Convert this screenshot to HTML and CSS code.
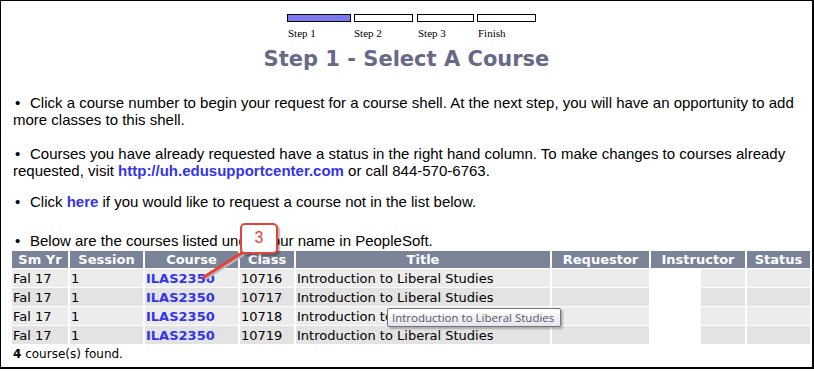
FILE: index.html
```html
<!DOCTYPE html>
<html lang="en">
<head>
  <meta charset="UTF-8">
  <title>Step 1 - Select A Course</title>
  <link rel="stylesheet" href="styles.css">
</head>
<body>
  <div class="frame">

    <!-- progress steps -->
    <div class="steps">
      <div class="step step-one"><div class="bar done"></div><span>Step 1</span></div>
      <div class="step step-two"><div class="bar"></div><span>Step 2</span></div>
      <div class="step step-three"><div class="bar"></div><span>Step 3</span></div>
      <div class="step step-four"><div class="bar"></div><span>Finish</span></div>
    </div>

    <h1 class="title">Step 1 - Select A Course</h1>

    <p class="note first"><span class="dot">&bull;</span>Click a course number to begin your request for a course shell. At the next step, you will have an opportunity to add more classes to this shell.</p>
    <p class="note second"><span class="dot">&bull;</span>Courses you have already requested have a status in the right hand column. To make changes to courses already requested, visit <a href="#">http://uh.edusupportcenter.com</a> or call 844-570-6763.</p>
    <p class="note third"><span class="dot">&bull;</span>Click <a href="#">here</a> if you would like to request a course not in the list below.</p>
    <p class="note last"><span class="dot">&bull;</span>Below are the courses listed under your name in PeopleSoft.</p>

    <table class="courses">
      <thead>
        <tr>
          <th class="c-yr">Sm Yr</th>
          <th class="c-session">Session</th>
          <th class="c-course">Course</th>
          <th class="c-class">Class</th>
          <th class="c-title">Title</th>
          <th class="c-req">Requestor</th>
          <th class="c-inst">Instructor</th>
          <th class="c-status">Status</th>
        </tr>
      </thead>
      <tbody>
        <tr>
          <td>Fal 17</td><td>1</td><td><a href="#">ILAS2350</a></td><td>10716</td>
          <td>Introduction to Liberal Studies</td><td></td><td class="inst"></td><td></td>
        </tr>
        <tr>
          <td>Fal 17</td><td>1</td><td><a href="#">ILAS2350</a></td><td>10717</td>
          <td>Introduction to Liberal Studies</td><td></td><td class="inst"></td><td></td>
        </tr>
        <tr>
          <td>Fal 17</td><td>1</td><td><a href="#">ILAS2350</a></td><td>10718</td>
          <td>Introduction to Liberal Studies</td><td></td><td class="inst"></td><td></td>
        </tr>
        <tr>
          <td>Fal 17</td><td>1</td><td><a href="#">ILAS2350</a></td><td>10719</td>
          <td>Introduction to Liberal Studies</td><td></td><td class="inst"></td><td></td>
        </tr>
      </tbody>
    </table>

    <p class="found"><b>4</b> course(s) found.</p>

    <!-- annotation callout -->
    <svg class="arrow" width="814" height="372" viewBox="0 0 814 372">
      <line x1="248" y1="249" x2="204" y2="277" stroke="#b9b9b9" stroke-width="3" transform="translate(1,2)"/>
      <line x1="248" y1="249" x2="204" y2="277" stroke="#e5433a" stroke-width="3" stroke-linecap="round"/>
    </svg>
    <div class="callout">3</div>

    <!-- hover tooltip -->
    <div class="tooltip">Introduction to Liberal Studies</div>
  </div>
</body>
</html>
```

FILE: styles.css
```css
/* Global */
body {
  margin: 0;
  padding: 0;
  background: #fff;
  color: #000;
}

.frame {
  position: relative;
  width: 814px;
  height: 369px;
  box-sizing: border-box;
  border: 1px solid #000;
  border-right-width: 2px;
  border-bottom-width: 2px;
  padding: 13px 0 0 12px;
  overflow: hidden;
}

/* progress steps */
.steps {
  display: flex;
  padding-left: 274px;
  gap: 3px;
}

.step {
  display: flex;
  flex-direction: column;
}

.step-one { width: 64px; }
.step-two { width: 59px; }
.step-three { width: 57px; margin-left: 1px; }
.step-four { width: 59px; }

.bar {
  height: 6px;
  border: 1px solid #000;
}

.bar.done {
  background-color: #7b7bef;
}

.step span {
  font-family: "Liberation Serif", serif;
  font-size: 11px;
  line-height: 12px;
  margin-top: 5px;
  padding-left: 1px;
}

.step-two span { margin-left: -1px; }

/* heading */
.title {
  margin: 7px 0 0 -12px;
  text-align: center;
  font-family: "DejaVu Sans", Verdana, sans-serif;
  font-size: 21px;
  line-height: 26px;
  font-weight: bold;
  color: #686889;
}

/* info paragraphs */
.note {
  margin: 0 16px 0 0;
  font-family: "Liberation Sans", Arial, sans-serif;
  font-size: 15px;
  line-height: 17px;
}

.note.first { margin-top: 22px; }
.note.second { margin-top: 17px; }
.note.third { margin-top: 14px; }
.note.last { margin-top: 22px; }

.note .dot {
  display: inline-block;
  width: 17px;
  padding-left: 2px;
  box-sizing: border-box;
}

.note a {
  color: #3434ea;
  font-weight: bold;
  text-decoration: none;
}

/* course table */
.courses {
  margin: 1px 0 0 -3px;
  border-collapse: separate;
  border-spacing: 2px 1px;
  font-family: "DejaVu Sans", Verdana, sans-serif;
  font-size: 13px;
}

.courses th {
  background: #7a8398;
  color: #fff;
  font-weight: bold;
  height: 17px;
  padding: 0;
  line-height: 16px;
  text-align: center;
}

.courses td {
  height: 18px;
  padding: 0 1px;
  line-height: 17px;
  background: #ececec;
  white-space: nowrap;
}

.courses tbody tr:nth-child(even) td {
  background: #e3e3e3;
}

.courses tbody tr td.inst {
  background: linear-gradient(to right, #fff 50px, #ececec 50px);
}

.courses tbody tr:nth-child(even) td.inst {
  background: linear-gradient(to right, #fff 50px, #e3e3e3 50px);
}

.courses a {
  color: #3434ea;
  font-weight: bold;
  text-decoration: none;
}

.c-yr { width: 56px; }
.c-session { width: 73px; }
.c-course { width: 93px; }
.c-class { width: 54px; }
.c-title { width: 254px; }
.c-req { width: 97px; }
.c-inst { width: 94px; }
.c-status { width: 63px; }

.found {
  margin: 1px 0 0 0;
  font-family: "DejaVu Sans", Verdana, sans-serif;
  font-size: 12px;
  line-height: 16px;
}

/* annotation */
.arrow {
  position: absolute;
  left: -1px;
  top: -1px;
  pointer-events: none;
}

.callout {
  position: absolute;
  left: 239px;
  top: 222px;
  width: 34px;
  height: 27px;
  border: 2px solid #e5433a;
  border-radius: 5px;
  background: #fff;
  box-shadow: 2px 2px 2px rgba(0, 0, 0, 0.3);
  color: #e5433a;
  font-family: "Liberation Sans", Arial, sans-serif;
  font-size: 16px;
  line-height: 26px;
  text-align: center;
}

/* tooltip */
.tooltip {
  position: absolute;
  left: 386px;
  top: 307px;
  height: 17px;
  padding: 0 6px 0 4px;
  border: 1px solid #767676;
  border-radius: 2px;
  background: linear-gradient(#ffffff, #e4e5f0);
  box-shadow: 2px 2px 2px rgba(0, 0, 0, 0.25);
  color: #575757;
  font-family: "Open Sans", "Noto Sans", sans-serif;
  font-size: 11.5px;
  line-height: 17px;
  white-space: nowrap;
}
```
